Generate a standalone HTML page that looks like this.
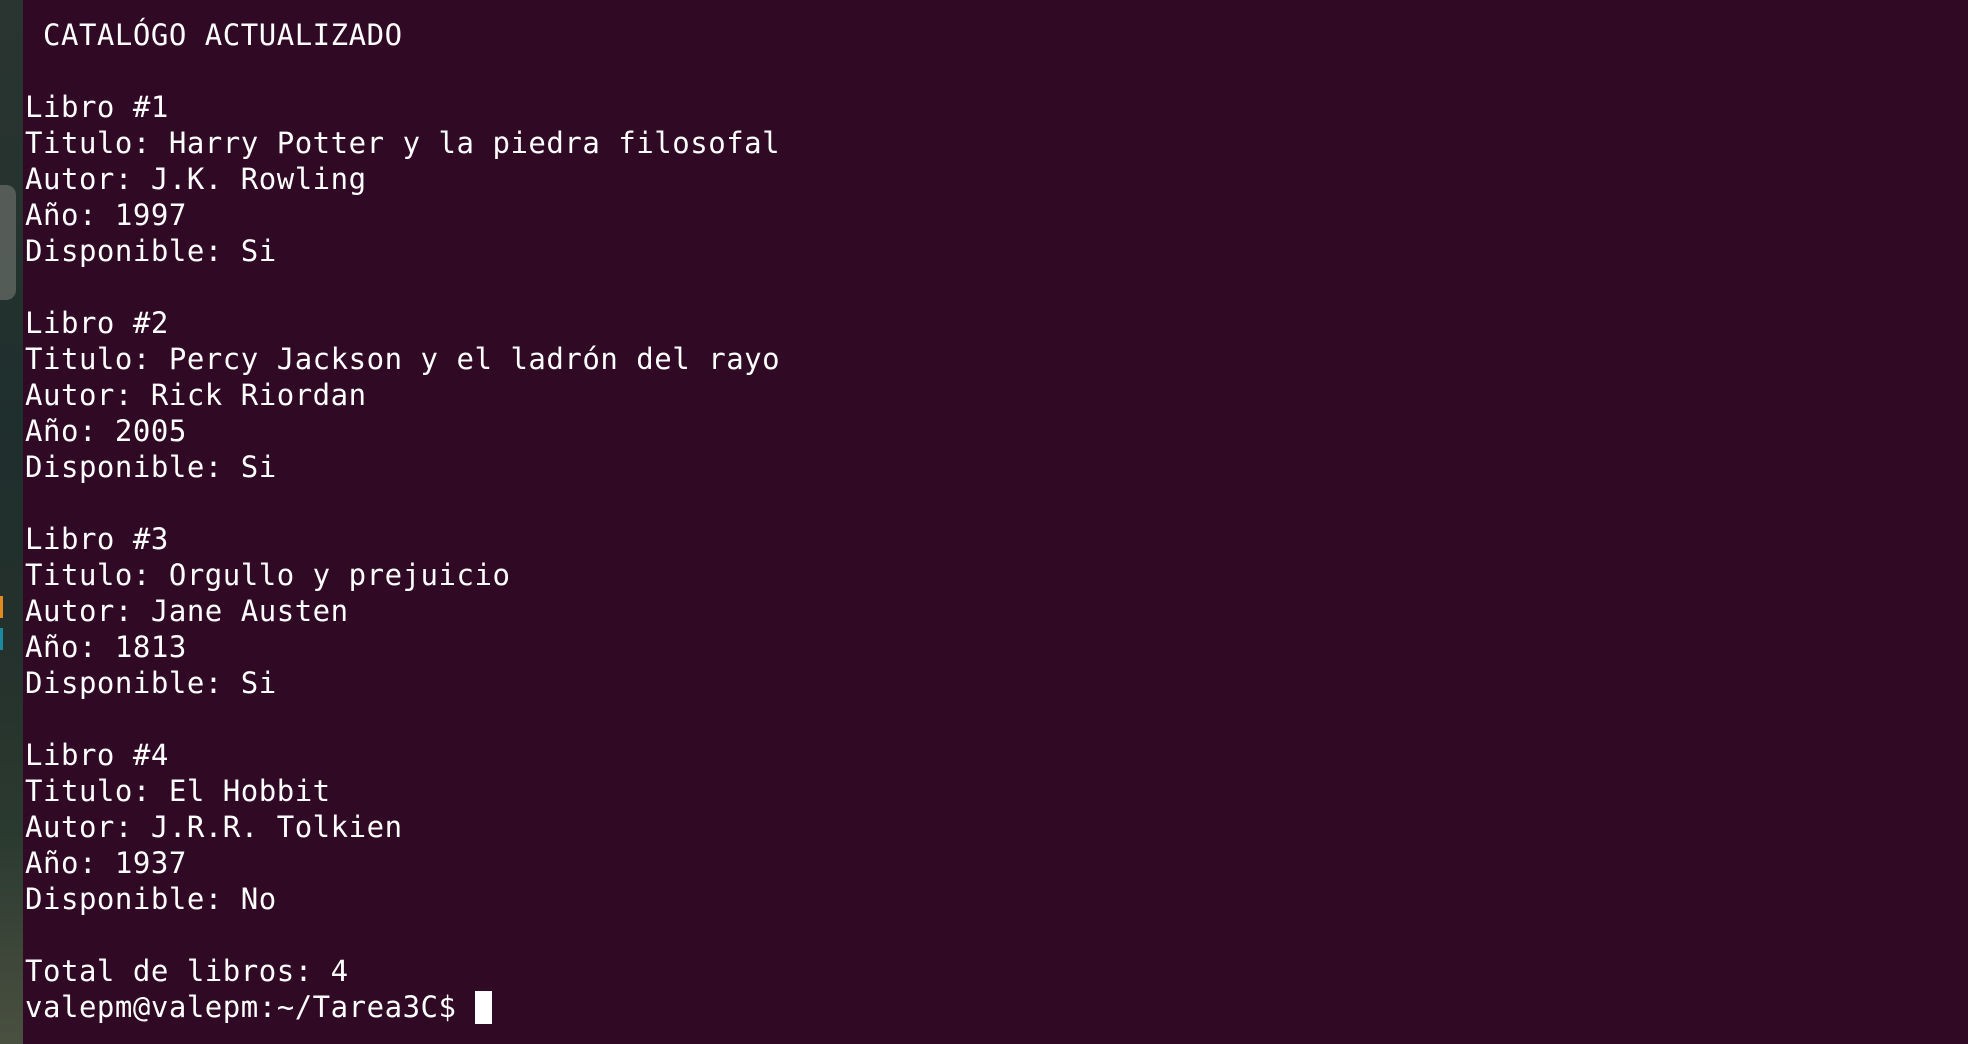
<!DOCTYPE html>
<html><head><meta charset="utf-8"><style>
html,body{margin:0;width:1968px;height:1044px;overflow:hidden;background:#300a24;}
.strip{position:absolute;left:0;top:0;width:23px;height:1044px;background:linear-gradient(180deg,#2a3430 0%,#26332f 20%,#1f2f2e 40%,#24302c 60%,#2b3a30 80%,#4a5040 100%);}
.knob{position:absolute;left:0;top:185px;width:16px;height:115px;background:#6a6e6a;border-radius:0 10px 10px 0;opacity:.7}
.o{position:absolute;left:0;top:596px;width:3px;height:22px;background:#e08a20}
.b{position:absolute;left:0;top:628px;width:3px;height:22px;background:#1a8aa0}
pre{position:absolute;left:25px;top:17px;margin:0;font-family:"DejaVu Sans Mono","Liberation Mono",monospace;font-size:29px;letter-spacing:0.52px;line-height:36px;color:#ffffff;}
.cur{display:inline-block;width:17px;height:33px;background:#fff;vertical-align:-7px}
</style></head><body>
<div class="strip"></div><div class="knob"></div><div class="o"></div><div class="b"></div>
<pre> CATALÓGO ACTUALIZADO

Libro #1
Titulo: Harry Potter y la piedra filosofal
Autor: J.K. Rowling
Año: 1997
Disponible: Si

Libro #2
Titulo: Percy Jackson y el ladrón del rayo
Autor: Rick Riordan
Año: 2005
Disponible: Si

Libro #3
Titulo: Orgullo y prejuicio
Autor: Jane Austen
Año: 1813
Disponible: Si

Libro #4
Titulo: El Hobbit
Autor: J.R.R. Tolkien
Año: 1937
Disponible: No

Total de libros: 4
valepm@valepm:~/Tarea3C$ <span class="cur"></span></pre>
</body></html>
